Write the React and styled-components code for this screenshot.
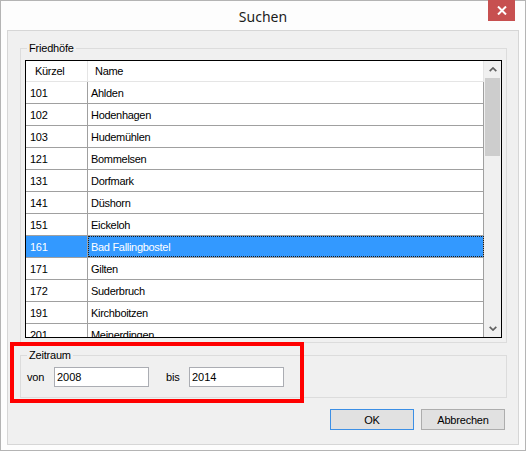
import React from 'react';
import styled, { createGlobalStyle } from 'styled-components';

const GlobalStyle = createGlobalStyle`
  html, body {
    margin: 0;
    padding: 0;
    background: #ffffff;
  }
  body {
    font-family: "Liberation Sans", Arial, sans-serif;
    font-size: 11px;
    color: #000;
  }
`;

const friedhoefe = [
  ['101', 'Ahlden'],
  ['102', 'Hodenhagen'],
  ['103', 'Hudemühlen'],
  ['121', 'Bommelsen'],
  ['131', 'Dorfmark'],
  ['141', 'Düshorn'],
  ['151', 'Eickeloh'],
  ['161', 'Bad Fallingbostel'],
  ['171', 'Gilten'],
  ['172', 'Suderbruch'],
  ['191', 'Kirchboitzen'],
  ['201', 'Meinerdingen'],
];

const Chevron = ({ down }) => (
  <svg width="8" height="5" viewBox="0 0 8 5">
    <polyline
      points={down ? '0.7,0.8 4,4 7.3,0.8' : '0.7,4.2 4,1 7.3,4.2'}
      fill="none"
      stroke="#606060"
      strokeWidth="1.7"
    />
  </svg>
);

const App = () => {
  return (
    <>
      <GlobalStyle />
      <Window>
        <TitleBar>
          <Title>Suchen</Title>
          <CloseButton>
            <svg width="10" height="9" viewBox="0 0 10 9">
              <path d="M1 0.5 L9 8.5 M9 0.5 L1 8.5" stroke="#fff" strokeWidth="2" />
            </svg>
          </CloseButton>
        </TitleBar>
        <Client>
          <Group $pl={4} $pb={4}>
            <Legend $ml={2}>Friedhöfe</Legend>
            <List>
              <Table>
                <HeaderRow>
                  <HeaderCell $pl={9} $divider>Kürzel</HeaderCell>
                  <HeaderCell $pl={7}>Name</HeaderCell>
                </HeaderRow>
                {friedhoefe.map(([code, name]) => {
                  const selected = code === '161';
                  return (
                    <Row key={code} $selected={selected}>
                      <Cell $pl={4}>{code}</Cell>
                      <Cell $pl={3} $focus={selected}>{name}</Cell>
                    </Row>
                  );
                })}
              </Table>
              <ScrollBar>
                <ArrowButton><Chevron /></ArrowButton>
                <Track>
                  <Thumb />
                </Track>
                <ArrowButton><Chevron down /></ArrowButton>
              </ScrollBar>
            </List>
          </Group>

          <Group $mt={5} $pl={6} $pb={10}>
            <Legend $ml={0}>Zeitraum</Legend>
            <FieldRow>
              <FieldLabel $w={27}>von</FieldLabel>
              <TextBox readOnly defaultValue="2008" />
              <FieldLabel $w={23} $ml={17}>bis</FieldLabel>
              <TextBox readOnly defaultValue="2014" />
            </FieldRow>
          </Group>

          <ButtonRow>
            <Button $default>OK</Button>
            <Button>Abbrechen</Button>
          </ButtonRow>
        </Client>
        <Highlight />
      </Window>
    </>
  );
};

const Window = styled.div`
  position: relative;
  box-sizing: border-box;
  width: 526px;
  height: 451px;
  border: 1px solid #b4b4b4;
  background: #fdfdfd;
  padding: 0 6px 5px;
  display: flex;
  flex-direction: column;
`;

const TitleBar = styled.div`
  position: relative;
  height: 29px;
  display: flex;
  align-items: center;
  justify-content: center;
`;

const Title = styled.div`
  font-family: "Noto Sans", "Open Sans", sans-serif;
  font-size: 14px;
  color: #1b1b1b;
  padding-top: 2px;
`;

const CloseButton = styled.div`
  position: absolute;
  top: -1px;
  right: 4px;
  width: 27px;
  height: 21px;
  background: #c75050;
  display: flex;
  align-items: center;
  justify-content: center;
`;

const Client = styled.div`
  flex: 1;
  border: 1px solid #d6d6d6;
  background: #f0f0f0;
  padding: 10px 11px 0 12px;
  display: flex;
  flex-direction: column;
`;

const Group = styled.fieldset`
  margin: ${({ $mt }) => $mt || 0}px 0 0;
  padding: 5px 4px ${({ $pb }) => $pb}px ${({ $pl }) => $pl}px;
  border: 1px solid #dcdcdc;
  min-width: 0;
`;

const Legend = styled.legend`
  padding: 0 2px;
  margin-left: ${({ $ml }) => $ml}px;
  line-height: 14px;
  letter-spacing: -0.2px;
`;

const List = styled.div`
  box-sizing: border-box;
  height: 278px;
  border: 1px solid #000;
  background: #fff;
  display: flex;
`;

const Table = styled.div`
  flex: 1;
  overflow: hidden;
  display: flex;
  flex-direction: column;
`;

const HeaderRow = styled.div`
  flex: none;
  box-sizing: border-box;
  height: 21px;
  display: grid;
  grid-template-columns: 62px 1fr;
  border-bottom: 1px solid #e5e5e5;
  border-right: 1px solid #e5e5e5;
`;

const HeaderCell = styled.div`
  display: flex;
  align-items: center;
  padding-left: ${({ $pl }) => $pl}px;
  letter-spacing: -0.3px;
  border-right: ${({ $divider }) => ($divider ? '1px solid #e5e5e5' : 'none')};
`;

const Row = styled.div`
  flex: none;
  box-sizing: border-box;
  height: 22px;
  display: grid;
  grid-template-columns: 62px 1fr;
  border-bottom: 1px solid #a0a0a0;
  background: ${({ $selected }) => ($selected ? '#3399ff' : '#fff')};
  color: ${({ $selected }) => ($selected ? '#fff' : '#000')};
`;

const Cell = styled.div`
  display: flex;
  align-items: center;
  padding-left: ${({ $pl }) => $pl}px;
  border-right: 1px solid #a0a0a0;
  letter-spacing: -0.3px;
  white-space: nowrap;
  outline: ${({ $focus }) => ($focus ? '1px dotted #1a1a1a' : 'none')};
  outline-offset: -1px;
`;

const ScrollBar = styled.div`
  flex: none;
  width: 17px;
  background: #f0f0f0;
  display: flex;
  flex-direction: column;
`;

const ArrowButton = styled.div`
  flex: none;
  height: 17px;
  display: flex;
  align-items: center;
  justify-content: center;
`;

const Track = styled.div`
  flex: 1;
  padding: 0 1px;
`;

const Thumb = styled.div`
  height: 78px;
  background: #cdcdcd;
`;

const FieldRow = styled.div`
  display: flex;
  align-items: center;
`;

const FieldLabel = styled.span`
  width: ${({ $w }) => $w}px;
  margin-left: ${({ $ml }) => $ml || 0}px;
  letter-spacing: -0.2px;
`;

const TextBox = styled.input`
  box-sizing: border-box;
  width: 95px;
  height: 20px;
  margin: 0;
  border: 1px solid #abadb3;
  background: #fff;
  padding: 0 0 0 2px;
  font: inherit;
  color: #000;
  outline: none;
`;

const ButtonRow = styled.div`
  display: flex;
  justify-content: flex-end;
  gap: 7px;
  margin-top: 11px;
  padding-right: 2px;
`;

const Button = styled.button`
  box-sizing: border-box;
  width: 84px;
  height: 21px;
  margin: 0;
  padding: 0;
  background: #e1e1e1;
  border: 1px solid ${({ $default }) => ($default ? '#3c8fe5' : '#adadad')};
  font: inherit;
  letter-spacing: -0.2px;
  color: #000;
`;

const Highlight = styled.div`
  position: absolute;
  left: 9px;
  top: 341px;
  box-sizing: border-box;
  width: 294px;
  height: 61px;
  border: 4px solid #ff0000;
  pointer-events: none;
`;

export default App;
